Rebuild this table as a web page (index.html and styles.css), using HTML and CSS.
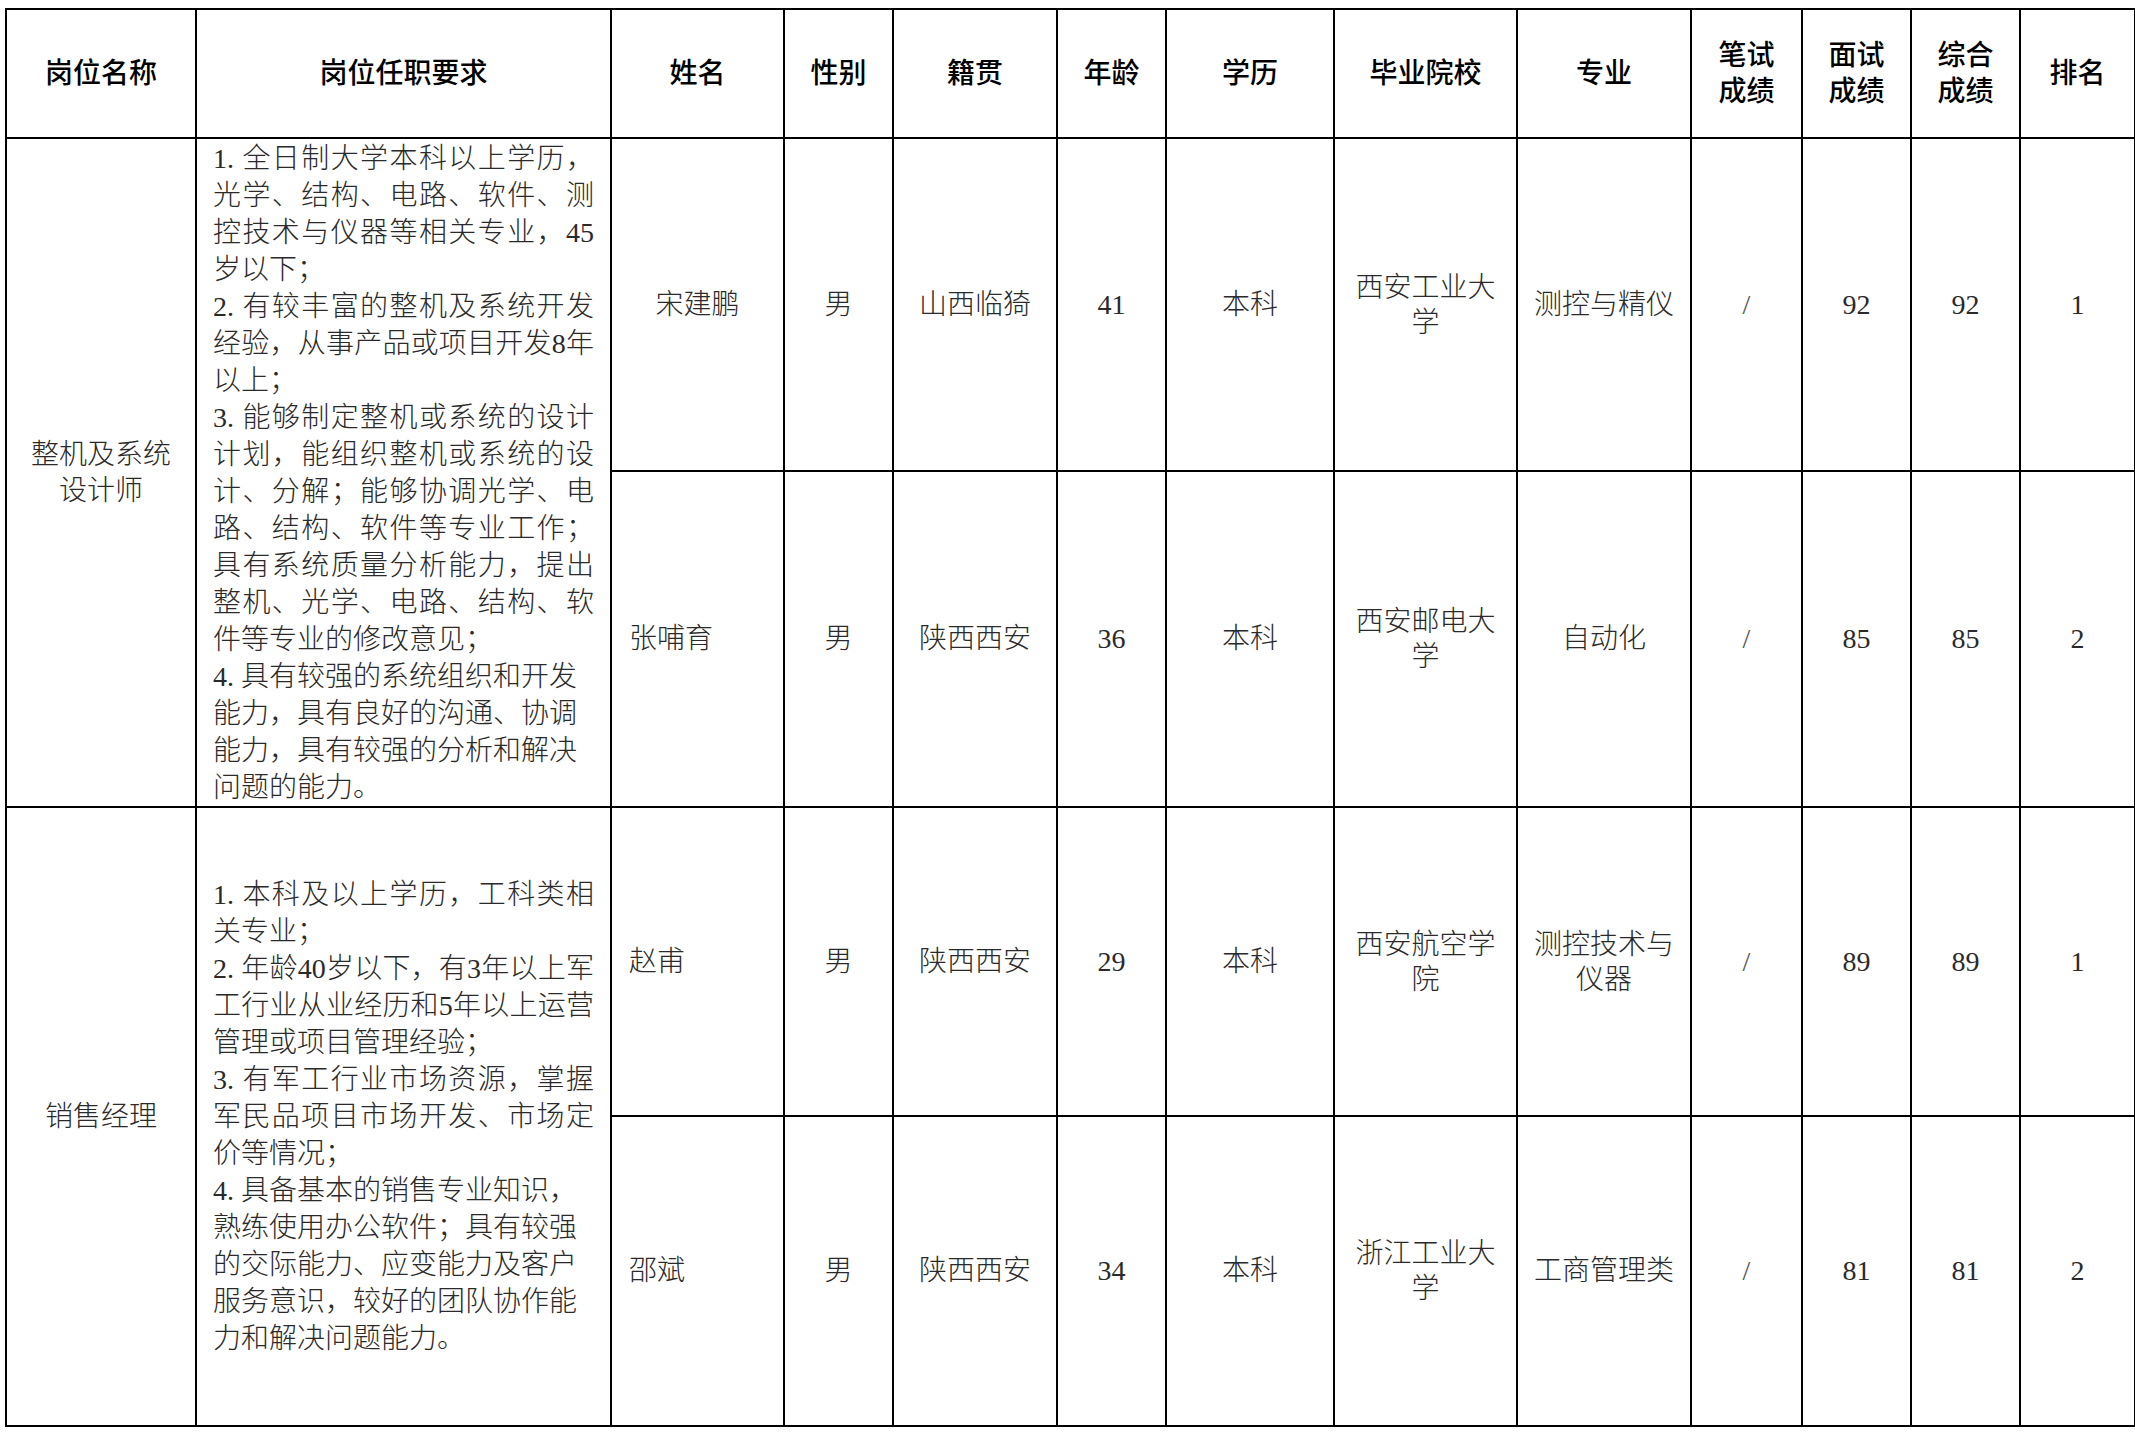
FILE: index.html
```html
<!DOCTYPE html>
<html lang="zh-CN">
<head>
<meta charset="utf-8">
<title>岗位招聘结果</title>
<link rel="stylesheet" href="styles.css">
</head>
<body>
<table class="grid">
  <colgroup>
    <col class="c-post"><col class="c-req"><col class="c-name"><col class="c-sex"><col class="c-home"><col class="c-age"><col class="c-edu"><col class="c-school"><col class="c-major"><col class="c-w"><col class="c-i"><col class="c-t"><col class="c-rank">
  </colgroup>
  <thead>
    <tr class="r-head">
      <th>岗位名称</th>
      <th>岗位任职要求</th>
      <th>姓名</th>
      <th>性别</th>
      <th>籍贯</th>
      <th>年龄</th>
      <th>学历</th>
      <th>毕业院校</th>
      <th>专业</th>
      <th>笔试<br>成绩</th>
      <th>面试<br>成绩</th>
      <th>综合<br>成绩</th>
      <th>排名</th>
    </tr>
  </thead>
  <tbody>
    <tr class="r1">
      <td rowspan="2" class="post">整机及系统<br>设计师</td>
      <td rowspan="2" class="req">
        <div class="ln j"><span class="no">1.</span>全日制大学本科以上学历，</div>
        <div class="ln j">光学、结构、电路、软件、测</div>
        <div class="ln j">控技术与仪器等相关专业，45</div>
        <div class="ln">岁以下；</div>
        <div class="ln j"><span class="no">2.</span>有较丰富的整机及系统开发</div>
        <div class="ln j">经验，从事产品或项目开发8年</div>
        <div class="ln">以上；</div>
        <div class="ln j"><span class="no">3.</span>能够制定整机或系统的设计</div>
        <div class="ln j">计划，能组织整机或系统的设</div>
        <div class="ln j">计、分解；能够协调光学、电</div>
        <div class="ln j">路、结构、软件等专业工作；</div>
        <div class="ln j">具有系统质量分析能力，提出</div>
        <div class="ln j">整机、光学、电路、结构、软</div>
        <div class="ln">件等专业的修改意见；</div>
        <div class="ln"><span class="no">4.</span>具有较强的系统组织和开发</div>
        <div class="ln">能力，具有良好的沟通、协调</div>
        <div class="ln">能力，具有较强的分析和解决</div>
        <div class="ln">问题的能力。</div>
      </td>
      <td class="ctr">宋建鹏</td>
      <td class="ctr">男</td>
      <td class="ctr">山西临猗</td>
      <td class="ctr">41</td>
      <td class="ctr">本科</td>
      <td class="ctr school">西安工业大<br>学</td>
      <td class="ctr">测控与精仪</td>
      <td class="ctr slash">/</td>
      <td class="ctr">92</td>
      <td class="ctr">92</td>
      <td class="ctr">1</td>
    </tr>
    <tr class="r2">
      <td class="left">张哺育</td>
      <td class="ctr">男</td>
      <td class="ctr">陕西西安</td>
      <td class="ctr">36</td>
      <td class="ctr">本科</td>
      <td class="ctr school">西安邮电大<br>学</td>
      <td class="ctr">自动化</td>
      <td class="ctr slash">/</td>
      <td class="ctr">85</td>
      <td class="ctr">85</td>
      <td class="ctr">2</td>
    </tr>
    <tr class="r3">
      <td rowspan="2" class="post">销售经理</td>
      <td rowspan="2" class="req">
        <div class="ln j"><span class="no">1.</span>本科及以上学历，工科类相</div>
        <div class="ln">关专业；</div>
        <div class="ln j"><span class="no">2.</span>年龄40岁以下，有3年以上军</div>
        <div class="ln j">工行业从业经历和5年以上运营</div>
        <div class="ln">管理或项目管理经验；</div>
        <div class="ln j"><span class="no">3.</span>有军工行业市场资源，掌握</div>
        <div class="ln j">军民品项目市场开发、市场定</div>
        <div class="ln">价等情况；</div>
        <div class="ln"><span class="no">4.</span>具备基本的销售专业知识，</div>
        <div class="ln">熟练使用办公软件；具有较强</div>
        <div class="ln">的交际能力、应变能力及客户</div>
        <div class="ln">服务意识，较好的团队协作能</div>
        <div class="ln">力和解决问题能力。</div>
      </td>
      <td class="left">赵甫</td>
      <td class="ctr">男</td>
      <td class="ctr">陕西西安</td>
      <td class="ctr">29</td>
      <td class="ctr">本科</td>
      <td class="ctr school">西安航空学<br>院</td>
      <td class="ctr school">测控技术与<br>仪器</td>
      <td class="ctr slash">/</td>
      <td class="ctr">89</td>
      <td class="ctr">89</td>
      <td class="ctr">1</td>
    </tr>
    <tr class="r4">
      <td class="left">邵斌</td>
      <td class="ctr">男</td>
      <td class="ctr">陕西西安</td>
      <td class="ctr">34</td>
      <td class="ctr">本科</td>
      <td class="ctr school">浙江工业大<br>学</td>
      <td class="ctr">工商管理类</td>
      <td class="ctr slash">/</td>
      <td class="ctr">81</td>
      <td class="ctr">81</td>
      <td class="ctr">2</td>
    </tr>
  </tbody>
</table>
</body>
</html>
```
FILE: styles.css
```css
html, body {
  margin: 0;
  padding: 0;
  background: #ffffff;
}

body {
  font-family: "Liberation Serif", "Noto Sans CJK SC", serif;
  font-size: 28px;
  color: #2a2a2a;
}

.grid {
  margin: 8px 0 0 5px;
  border-collapse: collapse;
  table-layout: fixed;
  width: 2129px;
}

.c-post { width: 190px; }
.c-req { width: 415px; }
.c-name { width: 173px; }
.c-sex { width: 109px; }
.c-home { width: 164px; }
.c-age { width: 109px; }
.c-edu { width: 168px; }
.c-school { width: 183px; }
.c-major { width: 174px; }
.c-w { width: 111px; }
.c-i { width: 109px; }
.c-t { width: 109px; }
.c-rank { width: 115px; }

.grid th,
.grid td {
  border: 2px solid #000000;
  padding: 0;
  vertical-align: middle;
  text-align: center;
  line-height: 36px;
}

.grid th {
  font-weight: 500;
  color: #000000;
}

.grid td {
  font-weight: 300;
}

.r-head { height: 129px; }
.r1 { height: 333px; }
.r2 { height: 336px; }
.r3 { height: 309px; }
.r4 { height: 310px; }

.post {
  line-height: 37px;
}

.req {
  text-align: left;
  padding: 0 16px !important;
}

.ln {
  line-height: 37px;
  text-align: left;
}

.ln.j {
  text-align: justify;
  text-align-last: justify;
}

.no {
  display: inline-block;
  width: 28px;
  text-align: left;
}

.left {
  text-align: left !important;
  padding-left: 17px !important;
}

.school {
  line-height: 35px !important;
}

.slash {
  color: #555555;
}
```
